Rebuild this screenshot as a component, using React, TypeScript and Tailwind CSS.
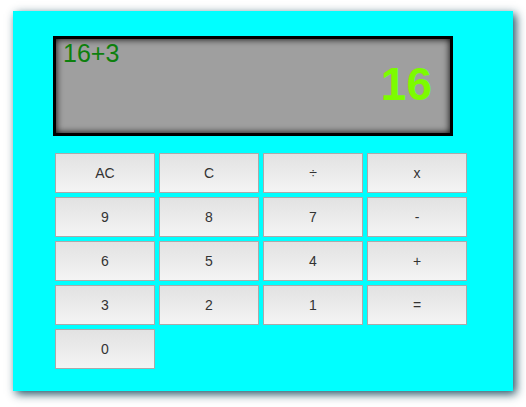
import React from 'react';

const keys: string[][] = [
    ['AC', 'C', '÷', 'x'],
    ['9', '8', '7', '-'],
    ['6', '5', '4', '+'],
    ['3', '2', '1', '='],
    ['0'],
];

const Key: React.FC<{ label: string }> = ({ label }) => (
    <button className="h-10 w-[100px] border border-[#aaaaaa] bg-gradient-to-b from-[#e2e2e2] to-[#f4f4f4] text-[14px] text-[#333333] font-['Liberation_Sans',Arial,sans-serif]">
        {label}
    </button>
);

const App: React.FC = () => {
    return (
        <div className="w-[526px] h-[407px] bg-white pt-[11px] pl-[13px]">
            <div className="w-[500px] h-[380px] bg-[#00ffff] pt-[25px] pl-10 shadow-[3px_3px_9px_rgba(5,60,80,0.9)]">
                <div className="w-[400px] h-[100px] border-[3px] border-black bg-[#9f9f9f] shadow-[inset_0_0_7px_#000] flex flex-col font-['Liberation_Sans',Arial,sans-serif]">
                    <div className="pl-[7px] pt-[1px] text-[25px] leading-[26px] text-[#0d800d]">16+3</div>
                    <div className="text-right pr-[18px] text-[46px] leading-[46px] font-bold text-[#7cfc00] -mt-[5px]">16</div>
                </div>
                <div className="mt-[17px] ml-[2px] flex flex-col gap-1">
                    {keys.map((row, i) => (
                        <div key={i} className="flex gap-1">
                            {row.map((k) => (
                                <Key key={k} label={k} />
                            ))}
                        </div>
                    ))}
                </div>
            </div>
        </div>
    );
};

export default App;
